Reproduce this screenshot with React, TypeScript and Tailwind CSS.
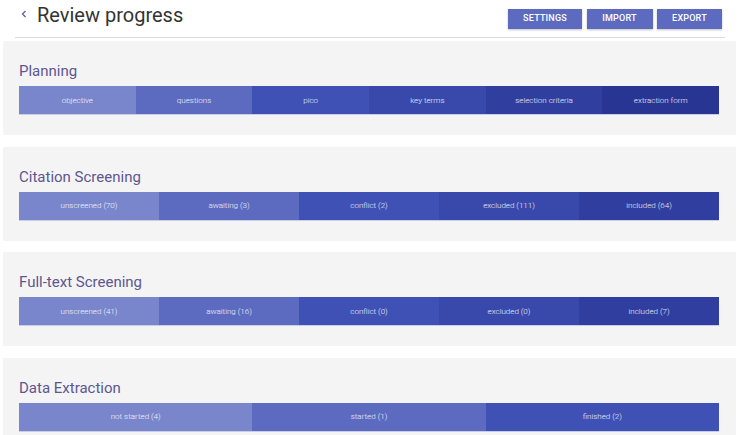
import React from "react";

type Segment = { label: string; color: string };

const indigo = ["#7986cb", "#5c6bc0", "#3f51b5", "#3949ab", "#303f9f", "#283593"];

const sections: { title: string; segments: string[] }[] = [
  {
    title: "Planning",
    segments: ["objective", "questions", "pico", "key terms", "selection criteria", "extraction form"],
  },
  {
    title: "Citation Screening",
    segments: ["unscreened (70)", "awaiting (3)", "conflict (2)", "excluded (111)", "included (64)"],
  },
  {
    title: "Full-text Screening",
    segments: ["unscreened (41)", "awaiting (16)", "conflict (0)", "excluded (0)", "included (7)"],
  },
  {
    title: "Data Extraction",
    segments: ["not started (4)", "started (1)", "finished (2)"],
  },
];

function ProgressBar({ segments }: { segments: Segment[] }) {
  return (
    <div className="flex h-[28px] w-full shadow-[0_1px_0_rgba(121,134,203,0.35)]">
      {segments.map((s) => (
        <div
          key={s.label}
          className="flex flex-1 items-center justify-center pt-[1px] text-[8px] font-light text-white/90"
          style={{ backgroundColor: s.color }}
        >
          {s.label}
        </div>
      ))}
    </div>
  );
}

export default function App() {
  return (
    <div className="min-h-[435px] bg-white font-['Roboto','Liberation_Sans',sans-serif]">
      {/* Header */}
      <div className="ml-[15px] mr-[14px] flex h-[38px] items-start justify-between border-b border-[#dcdcdc]">
        <div className="flex items-center pt-[3px]">
          <svg width="12" height="12" viewBox="0 0 12 12" className="ml-[3px] mr-[7px] mt-[-2px]">
            <path d="M7.5 3 L4.5 6 L7.5 9" fill="none" stroke="#6b5ea8" strokeWidth="1.4" />
          </svg>
          <h1 className="text-[20px] leading-[24px] text-[#333]">Review progress</h1>
        </div>
        <div className="mr-[3px] mt-[9px] flex gap-[4.5px]">
          {["SETTINGS", "IMPORT", "EXPORT"].map((b) => (
            <button
              key={b}
              className="h-[20px] bg-[#5c6bc0] text-[9px] font-medium tracking-[0.2px] text-white shadow-[0_1px_2px_rgba(0,0,0,0.25)] first:w-[74px] [&:nth-child(2)]:w-[66px] last:w-[65px]"
            >
              {b}
            </button>
          ))}
        </div>
      </div>

      {/* Sections */}
      <div className="mt-[3px] flex flex-col gap-[11.5px] pl-[3px] pr-[3px]">
        {sections.map((sec) => (
          <div key={sec.title} className="h-[94px] bg-[#f4f4f4] pl-[16px] pr-[17px] pt-[20px]">
            <h2 className="h-[20px] text-[15px] leading-[20px] text-[#5d5791]">{sec.title}</h2>
            <div className="mt-[5px]">
              <ProgressBar
                segments={sec.segments.map((label, i) => ({ label, color: indigo[i] }))}
              />
            </div>
          </div>
        ))}
      </div>
    </div>
  );
}
